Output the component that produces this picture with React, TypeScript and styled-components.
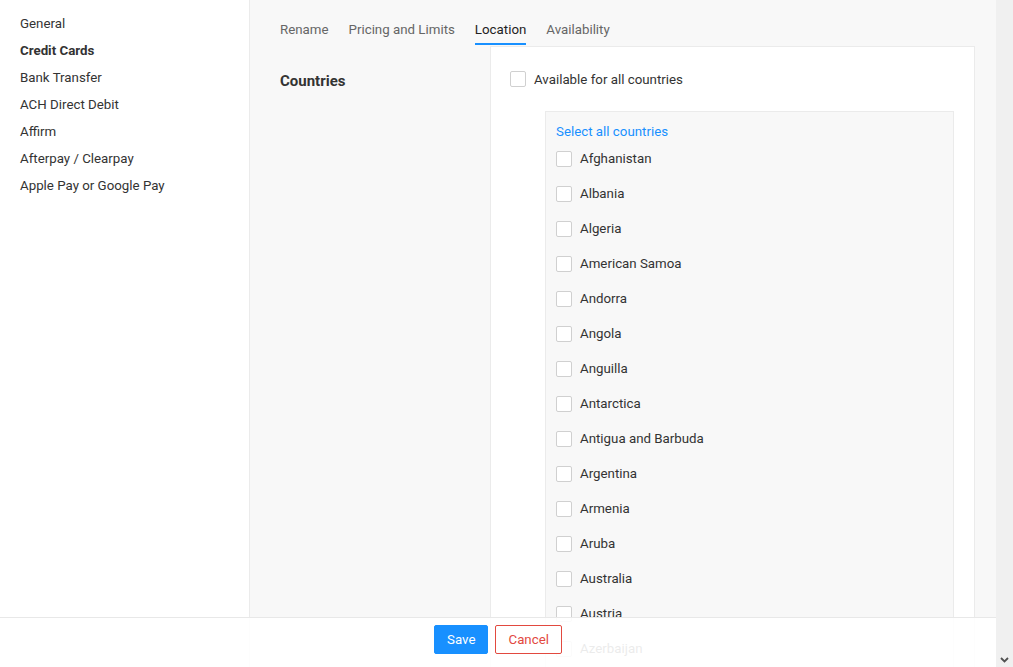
import React, { useState } from "react";
import styled, { createGlobalStyle } from "styled-components";

const GlobalStyle = createGlobalStyle`
  html, body {
    margin: 0;
    padding: 0;
    height: 100%;
    overflow: hidden;
  }
  body {
    font-family: Roboto, "Liberation Sans", Arial, sans-serif;
    font-size: 13.3px;
    color: #333;
  }
`;

const SIDEBAR_ITEMS = [
  "General",
  "Credit Cards",
  "Bank Transfer",
  "ACH Direct Debit",
  "Affirm",
  "Afterpay / Clearpay",
  "Apple Pay or Google Pay",
];

const TABS = ["Rename", "Pricing and Limits", "Location", "Availability"];

const COUNTRIES = [
  "Afghanistan",
  "Albania",
  "Algeria",
  "American Samoa",
  "Andorra",
  "Angola",
  "Anguilla",
  "Antarctica",
  "Antigua and Barbuda",
  "Argentina",
  "Armenia",
  "Aruba",
  "Australia",
  "Austria",
  "Azerbaijan",
  "Bahamas",
  "Bahrain",
];

function Checkbox({ checked, onChange }: { checked: boolean; onChange: () => void }) {
  return (
    <Box $checked={checked} onClick={onChange}>
      {checked && (
        <svg width="10" height="8" viewBox="0 0 10 8">
          <path d="M1 4l3 3 5-6" fill="none" stroke="#fff" strokeWidth="1.6" />
        </svg>
      )}
    </Box>
  );
}

export default function App() {
  const [allCountries, setAllCountries] = useState(false);
  const [selected, setSelected] = useState<string[]>([]);

  const toggle = (c: string) =>
    setSelected((s) => (s.includes(c) ? s.filter((x) => x !== c) : [...s, c]));

  return (
    <Screen>
      <GlobalStyle />
      <Page>
        <Sidebar>
          {SIDEBAR_ITEMS.map((item) => (
            <SideItem key={item} $active={item === "Credit Cards"}>
              {item}
            </SideItem>
          ))}
        </Sidebar>

        <Main>
          <Tabs>
            {TABS.map((t) => (
              <Tab key={t} $active={t === "Location"}>
                {t}
              </Tab>
            ))}
          </Tabs>

          <Section>
            <Label>Countries</Label>
            <Card>
              <CheckRow>
                <Checkbox checked={allCountries} onChange={() => setAllCountries(!allCountries)} />
                <span>Available for all countries</span>
              </CheckRow>

              <CountryBox>
                <SelectAll onClick={() => setSelected(COUNTRIES)}>Select all countries</SelectAll>
                {COUNTRIES.map((c) => (
                  <CountryRow key={c}>
                    <Checkbox checked={selected.includes(c)} onChange={() => toggle(c)} />
                    <span>{c}</span>
                  </CountryRow>
                ))}
              </CountryBox>
            </Card>
          </Section>
        </Main>

        <Footer>
          <SaveButton>Save</SaveButton>
          <CancelButton>Cancel</CancelButton>
        </Footer>
      </Page>

      <Scrollbar>
        <svg width="9" height="6" viewBox="0 0 9 6">
          <path d="M1 1l3.5 3.5L8 1" fill="none" stroke="#505050" strokeWidth="1.8" />
        </svg>
      </Scrollbar>
    </Screen>
  );
}

const Screen = styled.div`
  display: flex;
  width: 100vw;
  height: 100vh;
  overflow: hidden;
`;

const Page = styled.div`
  position: relative;
  flex: 1;
  display: grid;
  grid-template-columns: 250px 1fr;
  background: #f8f8f8;
  overflow: hidden;
`;

const Sidebar = styled.nav`
  background: #fff;
  border-right: 1px solid #ebebeb;
  padding-top: 10px;
`;

const SideItem = styled.div<{ $active?: boolean }>`
  padding: 0 20px;
  height: 27px;
  line-height: 27px;
  color: #333;
  font-weight: ${(p) => (p.$active ? 700 : 400)};
`;

const Main = styled.div`
  padding: 17px 21px 0 30px;
`;

const Tabs = styled.div`
  display: flex;
  gap: 20px;
  height: 29px;
`;

const Tab = styled.div<{ $active?: boolean }>`
  line-height: 25px;
  height: 28px;
  box-sizing: border-box;
  color: ${(p) => (p.$active ? "#222" : "#666")};
  border-bottom: 2px solid ${(p) => (p.$active ? "#1890ff" : "transparent")};
`;

const Section = styled.div`
  display: grid;
  grid-template-columns: 210px 1fr;
`;

const Label = styled.div`
  font-size: 15px;
  font-weight: 700;
  color: #333;
  padding-top: 26px;
`;

const Card = styled.div`
  background: #fff;
  border: 1px solid #ebebeb;
  border-bottom: none;
  padding: 23px 20px 0 19px;
`;

const CheckRow = styled.label`
  display: flex;
  align-items: center;
  gap: 8px;
  color: #333;
  height: 18px;
`;

const Box = styled.span<{ $checked: boolean }>`
  display: inline-flex;
  align-items: center;
  justify-content: center;
  width: 14px;
  height: 14px;
  flex: none;
  border: 1px solid #d0d0d0;
  border-radius: 2px;
  background: ${(p) => (p.$checked ? "#1890ff" : "#fff")};
  cursor: pointer;
`;

const CountryBox = styled.div`
  margin: 23px 0 0 35px;
  background: #f8f8f8;
  border: 1px solid #ebebeb;
  padding: 12px 10px 0 10px;
`;

const SelectAll = styled.div`
  color: #1890ff;
  line-height: 16px;
  height: 17px;
  cursor: pointer;
`;

const CountryRow = styled.label`
  display: flex;
  align-items: center;
  gap: 8px;
  height: 35px;
  color: #333;
`;

const Footer = styled.footer`
  position: absolute;
  left: 0;
  right: 0;
  bottom: 0;
  height: 42px;
  border-top: 1px solid #e8e8e8;
  background: rgba(255, 255, 255, 0.9);
  display: flex;
  justify-content: center;
  align-items: flex-start;
  gap: 7px;
  padding-top: 7px;
`;

const SaveButton = styled.button`
  height: 29px;
  padding: 0 12px;
  border: 1px solid #1890ff;
  background: #1890ff;
  color: #fff;
  font-family: inherit;
  font-size: 13.3px;
  border-radius: 2px;
`;

const CancelButton = styled.button`
  height: 29px;
  padding: 0 12px;
  border: 1px solid #e2493f;
  background: #fff;
  color: #e2493f;
  font-family: inherit;
  font-size: 13.3px;
  border-radius: 2px;
`;

const Scrollbar = styled.div`
  width: 17px;
  flex: none;
  background: #f0f0f0;
  display: flex;
  align-items: flex-end;
  justify-content: center;
  padding-bottom: 4px;
  box-sizing: border-box;
`;
